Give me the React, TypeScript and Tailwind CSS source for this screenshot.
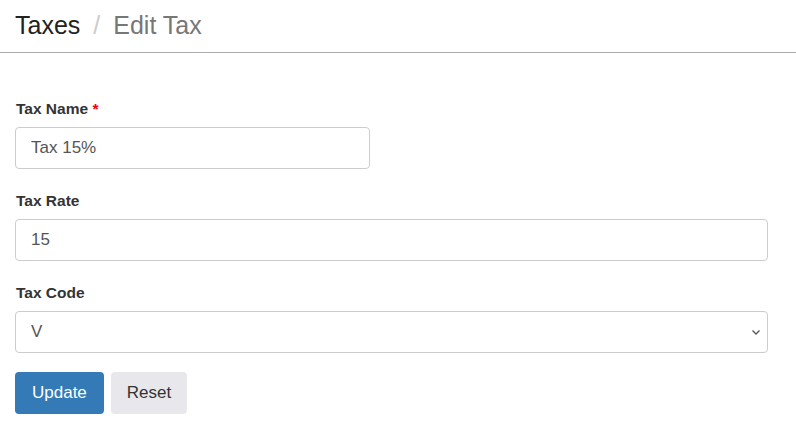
export default function App() {
  return (
    <div className="min-h-[432px] bg-white font-['Liberation_Sans',Arial,sans-serif] text-[#333]">
      {/* Breadcrumb header */}
      <div className="h-[53px] border-b border-[#aaa] px-[15px] pt-[9px]">
        <h1 className="flex items-center text-[25px] leading-[32px]">
          <span className="text-[#222]">Taxes</span>
          <span className="mx-[13px] text-[#ccc]">/</span>
          <span className="text-[#777]">Edit Tax</span>
        </h1>
      </div>

      <form className="pl-[15px] pr-[28px] pt-[46px]">
        <div className="mb-[22px]">
          <label className="mb-[8px] block pl-px text-[15.5px] font-bold leading-[20px] text-[#333]">
            Tax Name <span className="text-red-600">*</span>
          </label>
          <input
            defaultValue="Tax 15%"
            className="block h-[42px] w-[355px] rounded border border-[#ccc] px-[15px] text-[17px] text-[#555] outline-none"
          />
        </div>

        <div className="mb-[22px]">
          <label className="mb-[8px] block pl-px text-[15.5px] font-bold leading-[20px] text-[#333]">
            Tax Rate
          </label>
          <input
            defaultValue="15"
            className="block h-[42px] w-full rounded border border-[#ccc] px-[15px] text-[17px] text-[#555] outline-none"
          />
        </div>

        <div className="mb-[19px]">
          <label className="mb-[8px] block pl-px text-[15.5px] font-bold leading-[20px] text-[#333]">
            Tax Code
          </label>
          <div className="relative">
            <select
              defaultValue="V"
              className="block h-[42px] w-full appearance-none rounded border border-[#ccc] bg-white px-[15px] text-[17px] text-[#555] outline-none"
            >
              <option value="V">V</option>
            </select>
            <svg
              className="pointer-events-none absolute right-[7px] top-[16px]"
              width="10"
              height="10"
              viewBox="0 0 10 10"
              fill="none"
              stroke="#555"
              strokeWidth="1.3"
            >
              <path d="M1.5 3.5 L5 7 L8.5 3.5" />
            </svg>
          </div>
        </div>

        <div className="flex gap-[7px]">
          <button
            type="button"
            className="h-[42px] rounded bg-[#337ab7] px-[17px] text-[17px] text-white"
          >
            Update
          </button>
          <button
            type="button"
            className="h-[42px] rounded bg-[#e8e8ec] px-[16px] text-[17px] text-[#333]"
          >
            Reset
          </button>
        </div>
      </form>
    </div>
  );
}
